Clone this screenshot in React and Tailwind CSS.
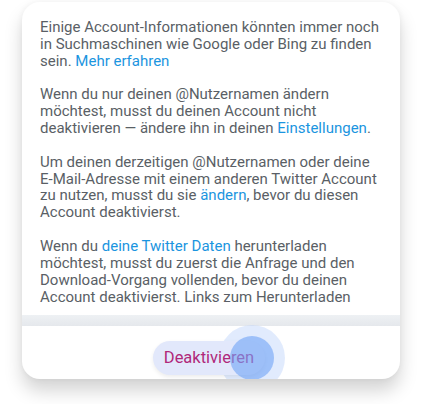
const LINK = 'text-[#1b95e0]';

export default function App() {
  return (
    <div className="w-[424px] h-[404px] bg-white overflow-hidden font-['Roboto',sans-serif]">
      <div className="ml-[22px] mt-[2px] w-[378px] rounded-[18px] bg-white shadow-[0_12px_18px_rgba(0,0,0,0.17),0_0_6px_rgba(0,0,0,0.05)] overflow-hidden">
        <div className="h-[305px] overflow-hidden pl-[18px] pt-[17px]">
          <div className="w-[342px] text-[15px] leading-[16.85px] text-[#5a5f66] space-y-[16.85px]">
            <p>
              Einige Account-Informationen könnten immer noch in Suchmaschinen wie Google oder Bing zu finden sein.{' '}
              <span className={LINK}>Mehr erfahren</span>
            </p>
            <p>
              Wenn du nur deinen @Nutzernamen ändern möchtest, musst du deinen Account nicht deaktivieren — ändere ihn in deinen{' '}
              <span className={LINK}>Einstellungen</span>.
            </p>
            <p>
              Um deinen derzeitigen @Nutzernamen oder deine E-Mail-Adresse mit einem anderen Twitter Account zu nutzen, musst du sie{' '}
              <span className={LINK}>ändern</span>, bevor du diesen Account deaktivierst.
            </p>
            <p>
              Wenn du <span className={LINK}>deine Twitter Daten</span> herunterladen möchtest, musst du zuerst die Anfrage und den Download-Vorgang vollenden, bevor du deinen Account deaktivierst. Links zum Herunterladen deiner Daten werden dir zugeschickt.
            </p>
          </div>
        </div>
        <div className="h-[8px]" />
        <div className="h-[11px] bg-gradient-to-b from-[#eef1f4] to-[#e5e8ec]" />
        <div className="h-[53px] pt-[15px] flex justify-center pr-[4px]">
          <div className="relative h-[34px]">
            <div className="absolute left-[66px] top-[-16px] w-[66px] h-[66px] rounded-full bg-[#bcd3fb]/45" />
            <div className="relative h-[34px] px-[11px] rounded-full bg-[#e2e8fb] shadow-[0_2px_4px_rgba(0,0,0,0.08)] flex items-center">
              <span className="relative text-[16.5px] text-[#b0287a]">Deaktivieren</span>
              <div className="absolute left-[77px] top-[-5px] w-[44px] h-[44px] rounded-full bg-[#6fa3f6]/60" />
            </div>
          </div>
        </div>
      </div>
    </div>
  );
}
